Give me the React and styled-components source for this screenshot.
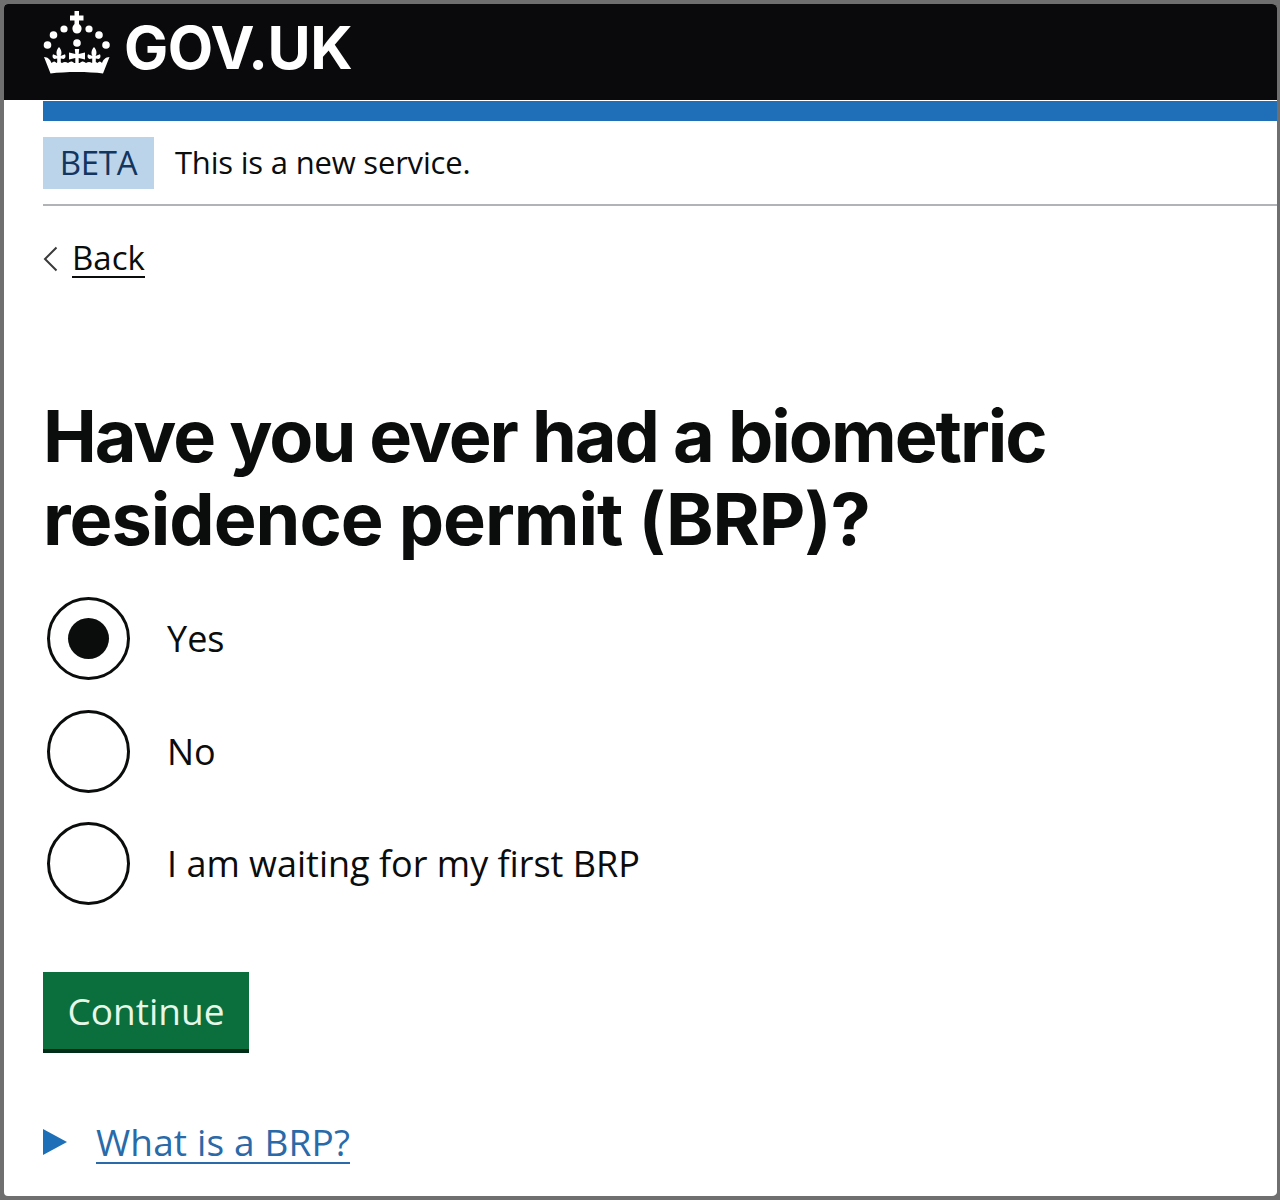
import React from "react";
import styled, { createGlobalStyle } from "styled-components";

const GlobalStyle = createGlobalStyle`
  html, body {
    margin: 0;
    padding: 0;
    background: #6f6f6f;
  }
  * {
    box-sizing: border-box;
  }
`;

const Frame = styled.div`
  width: 1280px;
  height: 1200px;
  border: 4px solid #6f6f6f;
  border-right-width: 3px;
  border-radius: 8px;
  background: #fff;
  overflow: hidden;
  font-family: "Open Sans", "Liberation Sans", sans-serif;
  color: #0b0c0c;
`;

const Header = styled.header`
  height: 96px;
  background: #0a0a0c;
  display: flex;
  align-items: flex-start;
  padding: 6px 0 0 39px;
  gap: 13px;
  color: #fff;
`;

const Wordmark = styled.span`
  font-family: "Inter", sans-serif;
  font-weight: 700;
  font-size: 59px;
  line-height: 76px;
  letter-spacing: -0.5px;
`;

const Main = styled.main`
  padding: 1px 0 0 39px;
`;

const BlueBar = styled.div`
  height: 20px;
  background: #1f6fb8;
`;

const PhaseBanner = styled.div`
  display: flex;
  align-items: center;
  gap: 21px;
  height: 85px;
  border-bottom: 2px solid #b1b4b6;
`;

const PhaseTag = styled.strong`
  width: 111px;
  height: 52px;
  background: #bbd4ea;
  color: #12365f;
  font-weight: 400;
  font-size: 33px;
  letter-spacing: -0.3px;
  display: flex;
  align-items: center;
  justify-content: center;
`;

const PhaseText = styled.span`
  font-size: 31px;
  letter-spacing: -0.2px;
  line-height: 40px;
  margin-top: -2px;
`;

const BackLink = styled.a`
  display: flex;
  align-items: center;
  gap: 14px;
  margin-top: 31px;
  height: 44px;
  font-size: 33px;
  color: #0b0c0c;
  span {
    border-bottom: 2px solid #0b0c0c;
    line-height: 36px;
  }
`;

const Heading = styled.h1`
  margin: 113px 0 0;
  font-family: "Inter", sans-serif;
  font-weight: 700;
  font-size: 72px;
  line-height: 83px;
`;

const HeadingLine = styled.span`
  display: block;
  letter-spacing: ${(p) => p.$spacing}px;
`;

const RadioList = styled.div`
  margin-top: 37px;
  padding-left: 4px;
  display: flex;
  flex-direction: column;
  gap: 29.5px;
`;

const RadioRow = styled.label`
  display: flex;
  align-items: center;
  gap: 37px;
  font-size: 36px;
`;

const RadioCircle = styled.span`
  width: 83px;
  height: 83px;
  border: 3px solid #0b0c0c;
  border-radius: 50%;
  display: flex;
  align-items: center;
  justify-content: center;
  &::after {
    content: "";
    display: ${(p) => (p.$checked ? "block" : "none")};
    width: 41px;
    height: 41px;
    border-radius: 50%;
    background: #0b0c0c;
  }
`;

const ContinueButton = styled.button`
  display: block;
  margin-top: 67px;
  width: 206px;
  height: 81px;
  border: 0;
  background: #0b6e3d;
  box-shadow: inset 0 -4px 0 #002d18;
  color: #e6f7e8;
  font-family: inherit;
  font-size: 37px;
  padding: 0 0 5px;
`;

const Details = styled.div`
  display: flex;
  align-items: center;
  gap: 29px;
  margin-top: 68px;
  font-size: 37px;
  letter-spacing: 0.15px;
`;

const Triangle = styled.span`
  width: 0;
  height: 0;
  border-style: solid;
  border-width: 13.5px 0 13.5px 24px;
  border-color: transparent transparent transparent #1d70b8;
  margin-bottom: 2px;
`;

const SummaryLink = styled.a`
  color: #2a6aa8;
  line-height: 41px;
  border-bottom: 2px solid #2a6aa8;
`;

const fleur =
  "M0 -9C3 -6 3 -2 1.500 0L6 -1.800C7 0 6.500 2.500 4.500 3L1.800 2.400L1.800 10L-1.800 10L-1.800 2.400L-4.500 3C-6.500 2.500 -7 0 -6 -1.800L-1.500 0C-3 -2 -3 -6 0 -9Z";

const Crown = () => (
  <svg width="68" height="65" viewBox="0 0 68 65" fill="#fff" aria-hidden="true">
    <path d="M31.500 1H36V5.500H40.500V10.500H36V14C38 15.500 39 17.500 38.500 19.500C38 22 36.500 23.500 34 23.500C31.500 23.500 30 22 29.500 19.500C29 17.500 30 15.500 31.500 14V10.500H27V5.500H31.500Z" />
    <circle cx="21" cy="19" r="3.600" />
    <circle cx="46" cy="19" r="3.600" />
    <circle cx="10.500" cy="25" r="3.800" />
    <circle cx="56" cy="25" r="3.800" />
    <circle cx="4.500" cy="35" r="3.800" />
    <circle cx="63" cy="35" r="3.800" />
    <circle cx="34" cy="33" r="3.800" />
    <path transform="translate(16 46)" d={fleur} />
    <path transform="translate(51 46)" d={fleur} />
    <path d="M31.800 39H36.200L35.700 44L42 42.500V49.500L35.700 48V56H32.300V48L26 49.500V42.500L32.300 44Z" />
    <path d="M1 47C5 47 7.500 50 8.500 53C10.500 51 12 51 13.500 53C15 51.500 17 51.500 19 53C21 51.500 23 51.500 25 53C27 51 29.500 51 31 53H37C38.500 51 41 51 43 53C45 51.500 47 51.500 49 53C51 51.500 53 51.500 54.500 53C56 51 57.500 51 59 53C60 50 62.500 47 66.500 47L60 63.500C46 61.500 22 61.500 7.500 63.500Z" />
  </svg>
);

const BackChevron = () => (
  <svg width="15" height="26" viewBox="0 0 15 26" fill="none" stroke="#3a3a3a" strokeWidth="2" aria-hidden="true">
    <path d="M13.500 1.500 2 13l11.500 11.500" />
  </svg>
);

export default function App() {
  return (
    <Frame>
      <GlobalStyle />
      <Header>
        <Crown />
        <Wordmark>GOV.UK</Wordmark>
      </Header>
      <Main>
        <BlueBar />
        <PhaseBanner>
          <PhaseTag>BETA</PhaseTag>
          <PhaseText>This is a new service.</PhaseText>
        </PhaseBanner>
        <BackLink>
          <BackChevron />
          <span>Back</span>
        </BackLink>
        <Heading>
          <HeadingLine $spacing={-2}>Have you ever had a biometric</HeadingLine>
          <HeadingLine $spacing={-1}>residence permit (BRP)?</HeadingLine>
        </Heading>
        <RadioList>
          <RadioRow>
            <RadioCircle $checked />
            Yes
          </RadioRow>
          <RadioRow>
            <RadioCircle />
            No
          </RadioRow>
          <RadioRow>
            <RadioCircle />I am waiting for my first BRP
          </RadioRow>
        </RadioList>
        <ContinueButton>Continue</ContinueButton>
        <Details>
          <Triangle />
          <SummaryLink>What is a BRP?</SummaryLink>
        </Details>
      </Main>
    </Frame>
  );
}
